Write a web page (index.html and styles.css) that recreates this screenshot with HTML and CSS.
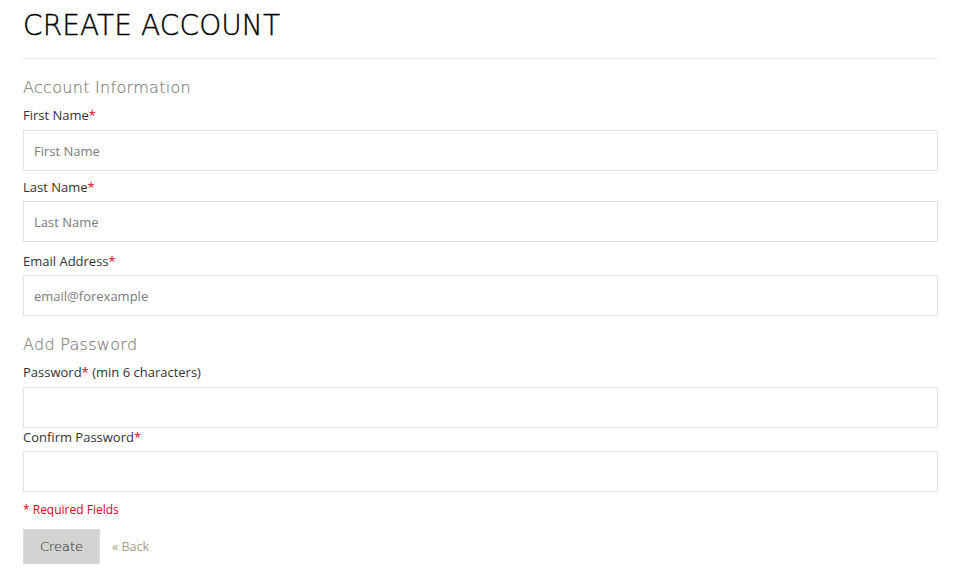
FILE: index.html
```html
<!DOCTYPE html>
<html lang="en">
<head>
<meta charset="utf-8">
<title>Create Account</title>
<link rel="stylesheet" href="styles.css">
</head>
<body>
<main class="page">
  <h1 class="page-title">CREATE ACCOUNT</h1>
  <form class="account-form">
    <h2 class="section-title">Account Information</h2>
    <div class="field field-first">
      <label class="field-label">First Name<span class="req">*</span></label>
      <input class="field-input" type="text" placeholder="First Name">
    </div>
    <div class="field">
      <label class="field-label">Last Name<span class="req">*</span></label>
      <input class="field-input" type="text" placeholder="Last Name">
    </div>
    <div class="field field-email">
      <label class="field-label">Email Address<span class="req">*</span></label>
      <input class="field-input" type="text" placeholder="email@forexample">
    </div>
    <h2 class="section-title section-pw">Add Password</h2>
    <div class="field field-pw">
      <label class="field-label">Password<span class="req">*</span> (min 6 characters)</label>
      <input class="field-input" type="password">
    </div>
    <div class="field field-tight">
      <label class="field-label">Confirm Password<span class="req">*</span></label>
      <input class="field-input" type="password">
    </div>
    <p class="required-note">* Required Fields</p>
    <div class="actions">
      <button class="btn-create" type="button">Create</button>
      <a class="back-link" href="#">« Back</a>
    </div>
  </form>
</main>
</body>
</html>
```
FILE: styles.css
```css
html, body {
  margin: 0;
  padding: 0;
  background: #fff;
}
body {
  font-family: "Open Sans", "Liberation Sans", sans-serif;
  color: #333;
}
.page {
  width: 915px;
  margin-left: 23px;
  padding-top: 9px;
}
.page-title {
  margin: 0;
  font-family: "DejaVu Sans", "Liberation Sans", sans-serif;
  font-weight: 300;
  font-size: 28px;
  line-height: 34px;
  color: #000;
  letter-spacing: 0.1px;
  padding-bottom: 15px;
  border-bottom: 1px solid #e6e6e6;
  -webkit-text-stroke: 0.35px #000;
}
.section-title {
  margin: 0;
  font-family: "DejaVu Sans", "Liberation Sans", sans-serif;
  font-weight: 300;
  font-size: 16px;
  line-height: 22px;
  color: #7a7a7a;
  letter-spacing: 0.3px;
  -webkit-text-stroke: 0.15px #7a7a7a;
}
.account-form {
  padding-top: 18px;
}
.field {
  display: flex;
  flex-direction: column;
}
.field-label {
  font-size: 13px;
  line-height: 18px;
  color: #333;
  margin-top: 7px;
  margin-bottom: 6px;
}
.field + .field .field-label {
  margin-top: 7px;
  margin-bottom: 5px;
}
.field-email .field-label {
  margin-top: 10px !important;
  margin-bottom: 5px !important;
}
.field-pw .field-label {
  margin-top: 7px;
  margin-bottom: 6px;
}
.field-tight .field-label {
  margin-top: 0 !important;
  margin-bottom: 5px !important;
}
.req {
  color: #e0001b;
}
.field-input {
  box-sizing: border-box;
  width: 100%;
  height: 41px;
  margin: 0;
  padding: 0 10px;
  border: 1px solid #e3e3e3;
  font-family: "Open Sans", "Liberation Sans", sans-serif;
  font-size: 13px;
  color: #333;
  background: #fff;
  outline: none;
}
.field-input::placeholder {
  color: #7c7c7c;
}
.section-pw {
  margin-top: 18px;
}
.required-note {
  margin: 10px 0 0;
  font-size: 12px;
  line-height: 16px;
  color: #e0001b;
}
.actions {
  display: flex;
  align-items: center;
  gap: 12px;
  margin-top: 11px;
}
.btn-create {
  box-sizing: border-box;
  width: 77px;
  height: 35px;
  border: 1px solid #d9d9d7;
  background: #d3d4d1;
  color: #4a4a4a;
  font-family: "DejaVu Sans", "Liberation Sans", sans-serif;
  font-size: 13px;
  font-weight: 300;
  -webkit-text-stroke: 0.2px #4a4a4a;
  padding: 0;
  cursor: pointer;
}
.back-link {
  font-size: 12.5px;
  color: #a89d88;
  text-decoration: none;
}
```
